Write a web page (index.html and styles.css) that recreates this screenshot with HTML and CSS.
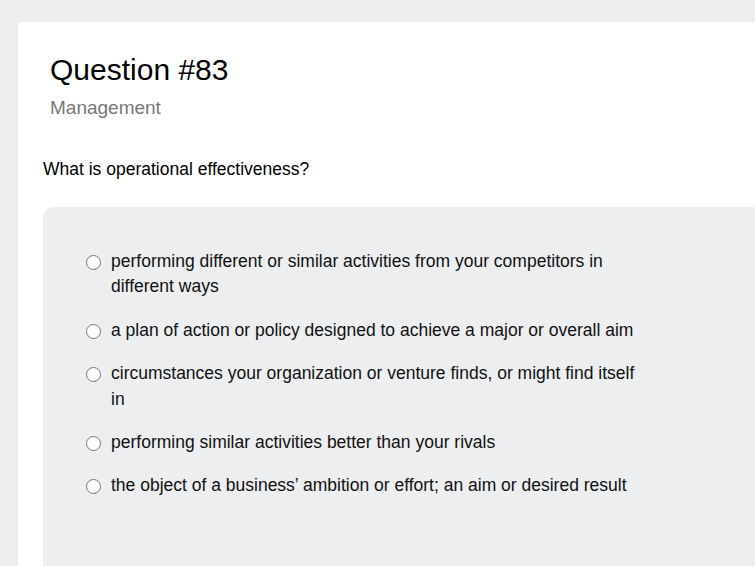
FILE: index.html
```html
<!DOCTYPE html>
<html lang="en">
<head>
    <meta charset="UTF-8">
    <meta name="viewport" content="width=device-width, initial-scale=1.0">
    <title>Question #83 - Management</title>
    <link rel="stylesheet" href="styles.css">
</head>
<body>
    <div class="question-card">
        <!-- Header -->
        <div class="card-header">
            <h1 class="card-title">Question #83</h1>
            <p class="card-subject">Management</p>
        </div>

        <!-- Question text -->
        <p class="question-text">What is operational effectiveness?</p>

        <!-- Answer options -->
        <div class="answers">
            <ul class="answer-list">
                <li class="answer">
                    <input type="radio" name="answer" id="a1">
                    <label for="a1">performing different or similar activities from your competitors in different ways</label>
                </li>
                <li class="answer">
                    <input type="radio" name="answer" id="a2">
                    <label for="a2">a plan of action or policy designed to achieve a major or overall aim</label>
                </li>
                <li class="answer">
                    <input type="radio" name="answer" id="a3">
                    <label for="a3">circumstances your organization or venture finds, or might find itself in</label>
                </li>
                <li class="answer">
                    <input type="radio" name="answer" id="a4">
                    <label for="a4">performing similar activities better than your rivals</label>
                </li>
                <li class="answer">
                    <input type="radio" name="answer" id="a5">
                    <label for="a5">the object of a business’ ambition or effort; an aim or desired result</label>
                </li>
            </ul>
        </div>
    </div>
</body>
</html>
```

FILE: styles.css
```css
/* Basic reset */
* {
    margin: 0;
    padding: 0;
    box-sizing: border-box;
}

body {
    font-family: 'Liberation Sans', Arial, sans-serif;
    background-color: #edeef0;
    color: #212529;
    padding: 22px 0 0 18px;
    height: 100vh;
    overflow: hidden;
}

/* Card */
.question-card {
    width: 800px;
    min-height: 600px;
    background-color: #fff;
    border-radius: 3px;
    padding: 30px 0 0 25px;
}

.card-header {
    padding-left: 7px;
}

.card-title {
    font-size: 30px;
    font-weight: normal;
    line-height: 1.2;
    color: #000;
}

.card-subject {
    font-size: 19px;
    line-height: 1.2;
    color: #777;
    margin-top: 9px;
}

.question-text {
    font-size: 17.5px;
    line-height: 1.5;
    color: #000;
    margin-top: 36px;
}

/* Answers box */
.answers {
    margin-top: 25px;
    background-color: #edeef0;
    border-radius: 10px;
    min-height: 400px;
    padding: 42px 0 0 43px;
}

.answer-list {
    list-style: none;
    width: 550px;
    display: flex;
    flex-direction: column;
    gap: 18px;
}

.answer {
    display: flex;
    align-items: flex-start;
    font-size: 17.5px;
    line-height: 25.4px;
    color: #111;
}

.answer input[type="radio"] {
    -webkit-appearance: none;
    appearance: none;
    flex: 0 0 15px;
    width: 15px;
    height: 15px;
    margin: 6px 10px 0 0;
    border: 1px solid #767676;
    border-radius: 50%;
    background-color: #fff;
}
```
